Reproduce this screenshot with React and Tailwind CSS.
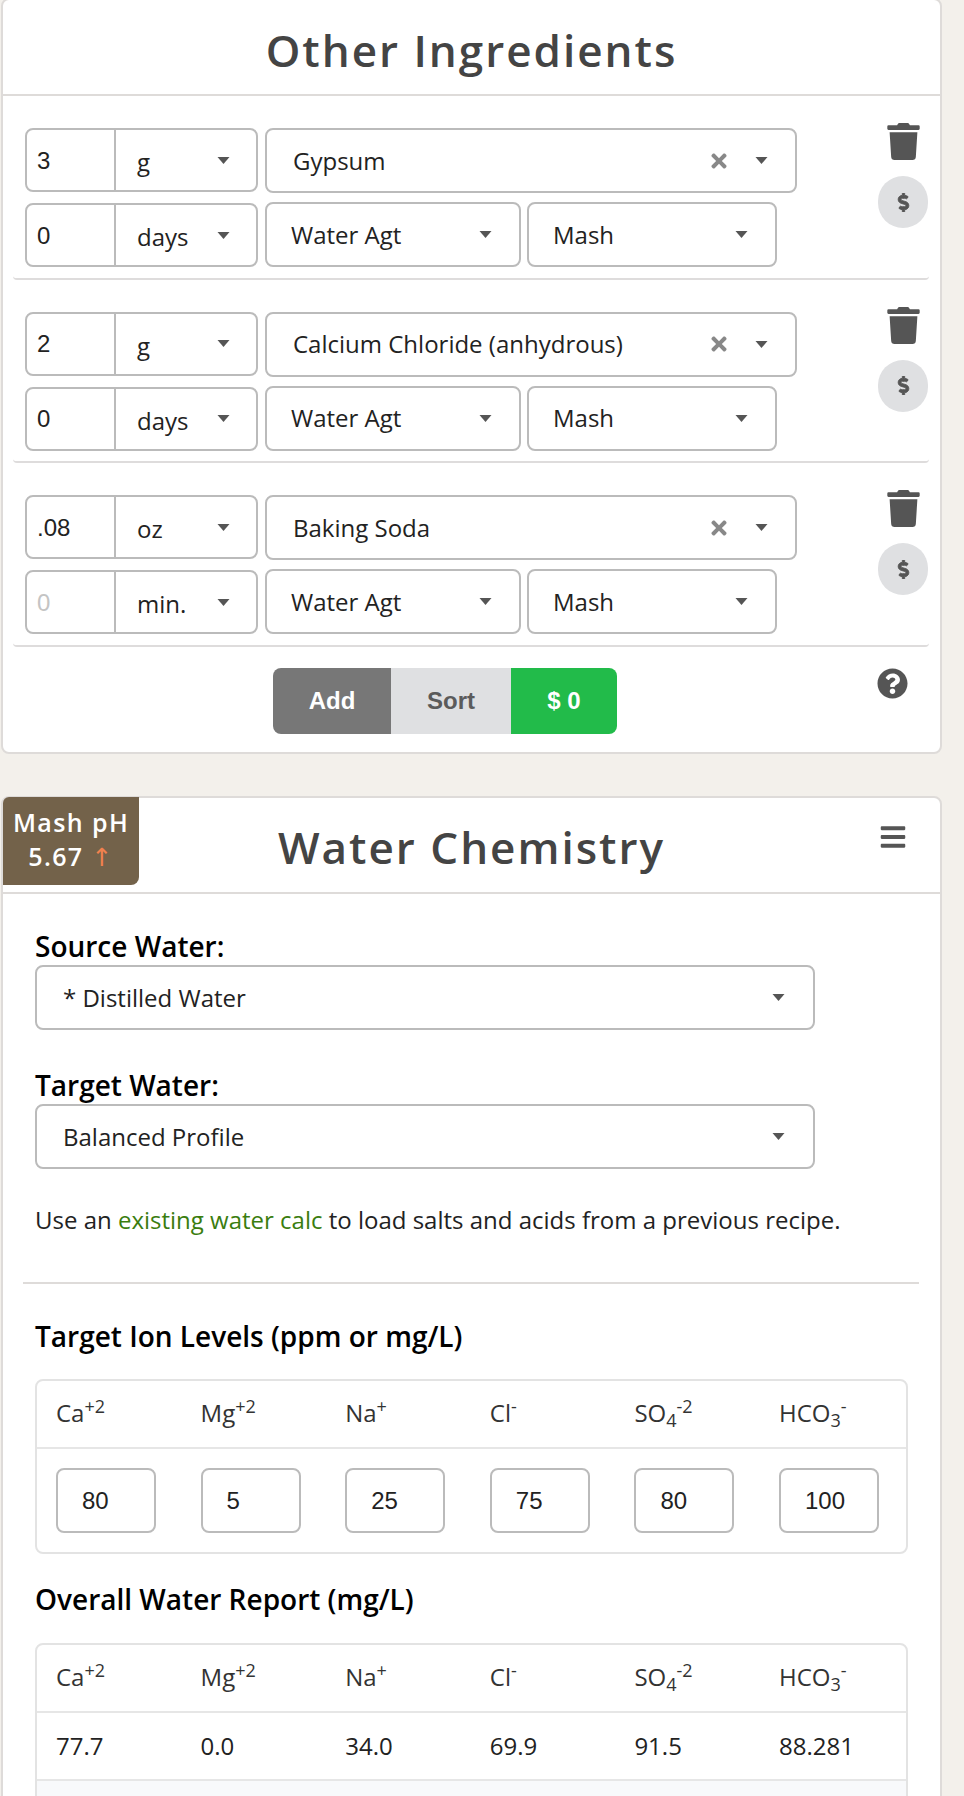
import { FaTrash, FaDollarSign, FaQuestionCircle, FaBars, FaTimes } from "react-icons/fa";

const openSans = "font-['Open_Sans',sans-serif]";
const arial = "font-['Liberation_Sans',Arial,sans-serif]";

const ingredients = [
  { amount: "3", unit: "g", name: "Gypsum", time: "0", timeUnit: "days" },
  { amount: "2", unit: "g", name: "Calcium Chloride (anhydrous)", time: "0", timeUnit: "days" },
  { amount: ".08", unit: "oz", name: "Baking Soda", time: "", timeUnit: "min." },
];

const ions = [
  { key: "ca", label: <>Ca<sup>+2</sup></>, target: "80", report: "77.7" },
  { key: "mg", label: <>Mg<sup>+2</sup></>, target: "5", report: "0.0" },
  { key: "na", label: <>Na<sup>+</sup></>, target: "25", report: "34.0" },
  { key: "cl", label: <>Cl<sup>-</sup></>, target: "75", report: "69.9" },
  { key: "so4", label: <>SO<sub>4</sub><sup>-2</sup></>, target: "80", report: "91.5" },
  { key: "hco3", label: <>HCO<sub>3</sub><sup>-</sup></>, target: "100", report: "88.281" },
];

const Caret = () => (
  <svg width="13" height="7" viewBox="0 0 13 7" className="shrink-0">
    <path d="M0.5 0h12L6.5 7z" fill="#555555" />
  </svg>
);

const Select = ({ label, className }) => (
  <div className={`flex h-[65px] items-center justify-between rounded-lg border-2 border-[#bbbbbb] bg-white text-[24px] text-[#222222] ${className}`}>
    <span>{label}</span>
    <Caret />
  </div>
);

const AmountGroup = ({ value, unit, className }) => (
  <div className={`flex h-[64px] w-[233px] rounded-lg border-2 border-[#bbbbbb] text-[24px] text-[#222222] ${className}`}>
    <input
      readOnly
      value={value}
      placeholder="0"
      className={`h-full w-[89px] border-r-2 border-[#bbbbbb] pt-[1px] pl-[10px] outline-none placeholder:text-[#c4c4c4] ${arial}`}
    />
    <div className="flex flex-1 items-center justify-between pr-[26px] pl-[21px]">
      <span className="pt-[4px]">{unit}</span>
      <Caret />
    </div>
  </div>
);

const IngredientRow = ({ item }) => (
  <div className="mr-[11px] ml-[10px] flex h-[183.5px] rounded-b-sm border-b-2 border-[#dedcdc] pt-[32px] pl-[12px]">
    <div className="flex w-[772px] flex-col gap-[9px]">
      <div className="flex gap-[7px]">
        <AmountGroup value={item.amount} unit={item.unit} />
        <div className="flex h-[65px] w-[532px] items-center rounded-lg border-2 border-[#bbbbbb] pr-[27px] pl-[26px] text-[24px] text-[#222222]">
          <span className="flex-1">{item.name}</span>
          <FaTimes className="mr-[25px] text-[#888888]" size={22} />
          <Caret />
        </div>
      </div>
      <div className="flex gap-[6px]">
        <AmountGroup value={item.time} unit={item.timeUnit} className="mt-[1px]" />
        <Select label="Water Agt" className="ml-[1px] w-[256px] pr-[27px] pl-[24px]" />
        <Select label="Mash" className="w-[250px] pr-[27px] pl-[24px]" />
      </div>
    </div>
    <div className="flex flex-1 flex-col items-center pl-[80px]">
      <FaTrash className="-mt-[5px] text-[#555555]" size={37} />
      <div className="mt-[16px] flex h-[52px] w-[50px] items-center justify-center rounded-full bg-[#dfe0e2] text-[#555555]">
        <FaDollarSign size={19} stroke="#555555" strokeWidth={24} />
      </div>
    </div>
  </div>
);

const IonTable = ({ children }) => (
  <div className="mx-[32px] rounded-lg border-2 border-[#e3e3e3]">
    <div className="grid h-[68px] grid-cols-[repeat(6,144.6px)] items-center border-b-2 border-[#e6e6e6] pl-[19px] text-[24px] text-[#333333]">
      {ions.map((ion) => (
        <div key={ion.key} className="pb-[2px]">{ion.label}</div>
      ))}
    </div>
    {children}
  </div>
);

export default function App() {
  return (
    <div className={`h-[1796px] w-[964px] overflow-hidden bg-[#f3f0eb] pl-[1px] ${openSans}`}>
      <div className="-mt-[2px] h-[756px] w-[941px] rounded-lg border-2 border-[#dedbd9] bg-white">
        <div className="flex h-[96px] items-center justify-center border-b-2 border-[#dedbd9] pt-[6px]">
          <h2 className="text-[44px] font-semibold tracking-[2px] text-[#444444]">Other Ingredients</h2>
        </div>
        {ingredients.map((item) => (
          <IngredientRow key={item.name} item={item} />
        ))}
        <div className="flex pt-[21px] pl-[9px]">
          <div className="ml-[261px] flex h-[66px] w-[344px] overflow-hidden rounded-lg text-[24px] font-bold">
            <div className={`flex w-[118px] items-center justify-center bg-[#777777] text-white ${arial}`}>Add</div>
            <div className={`flex w-[120px] items-center justify-center bg-[#dfe0e2] text-[#5b5b5b] ${arial}`}>Sort</div>
            <div className={`flex flex-1 items-center justify-center bg-[#22bb4a] text-white ${arial}`}>$ 0</div>
          </div>
          <FaQuestionCircle className="ml-[260px] text-[#555555]" size={31} />
        </div>
      </div>

      <div className="mt-[42px] h-[1100px] w-[941px] rounded-lg border-2 border-[#dedbd9] bg-white">
        <div className="grid h-[96px] grid-cols-[136px_1fr_136px] border-b-2 border-[#dedbd9]">
          <div className="-mt-[1px] h-[88px] rounded-br-lg rounded-tl-md bg-[#73624a] pt-[8px] text-center text-[25px] leading-[34px] font-semibold tracking-[1.4px] text-white">
            <div>Mash pH</div>
            <div>5.67 <span className="font-['DejaVu_Sans'] font-normal text-[#f0814e]">↑</span></div>
          </div>
          <h2 className="self-center pt-[4px] text-center text-[44px] font-semibold tracking-[2px] text-[#444444]">Water Chemistry</h2>
          <div className="flex justify-end pt-[25px] pr-[33px]">
            <FaBars className="text-[#555555]" size={28} />
          </div>
        </div>

        <div className="px-[32px] pt-[34px]">
          <div className="text-[28px] leading-[37px] font-semibold text-black">Source Water:</div>
          <Select label="* Distilled Water" className="w-[780px] pr-[28px] pl-[26px]" />
          <div className="mt-[37px] text-[28px] leading-[37px] font-semibold text-black">Target Water:</div>
          <Select label="Balanced Profile" className="w-[780px] pr-[28px] pl-[26px]" />
          <p className="mt-[33px] text-[24px] leading-[36px] text-[#222222]">
            Use an <span className="text-[#3a7d0f]">existing water calc</span> to load salts and acids from a previous recipe.
          </p>
        </div>

        <div className="mr-[21px] ml-[20px] mt-[44px] border-b-2 border-[#dedbd9]" />

        <div className="mt-[34px] px-[32px] text-[28px] leading-[36px] font-semibold text-black">Target Ion Levels (ppm or mg/L)</div>
        <div className="mt-[25px]">
          <IonTable>
            <div className="grid h-[103px] grid-cols-[repeat(6,144.6px)] items-center pl-[19px]">
              {ions.map((ion) => (
                <input
                  key={ion.key}
                  readOnly
                  value={ion.target}
                  className={`h-[65px] w-[100px] rounded-lg border-2 border-[#bbbbbb] pl-[24px] text-[24px] text-[#222222] outline-none ${arial}`}
                />
              ))}
            </div>
          </IonTable>
        </div>

        <div className="mt-[27px] px-[32px] text-[28px] leading-[36px] font-semibold text-black">Overall Water Report (mg/L)</div>
        <div className="mt-[26px]">
          <IonTable>
            <div className="grid h-[68px] grid-cols-[repeat(6,144.6px)] items-center border-b-2 border-[#e6e6e6] pl-[19px] text-[24px] text-[#222222]">
              {ions.map((ion) => (
                <div key={ion.key}>{ion.report}</div>
              ))}
            </div>
            <div className="h-[60px] bg-[#f8f9fb]" />
          </IonTable>
        </div>
      </div>
    </div>
  );
}
